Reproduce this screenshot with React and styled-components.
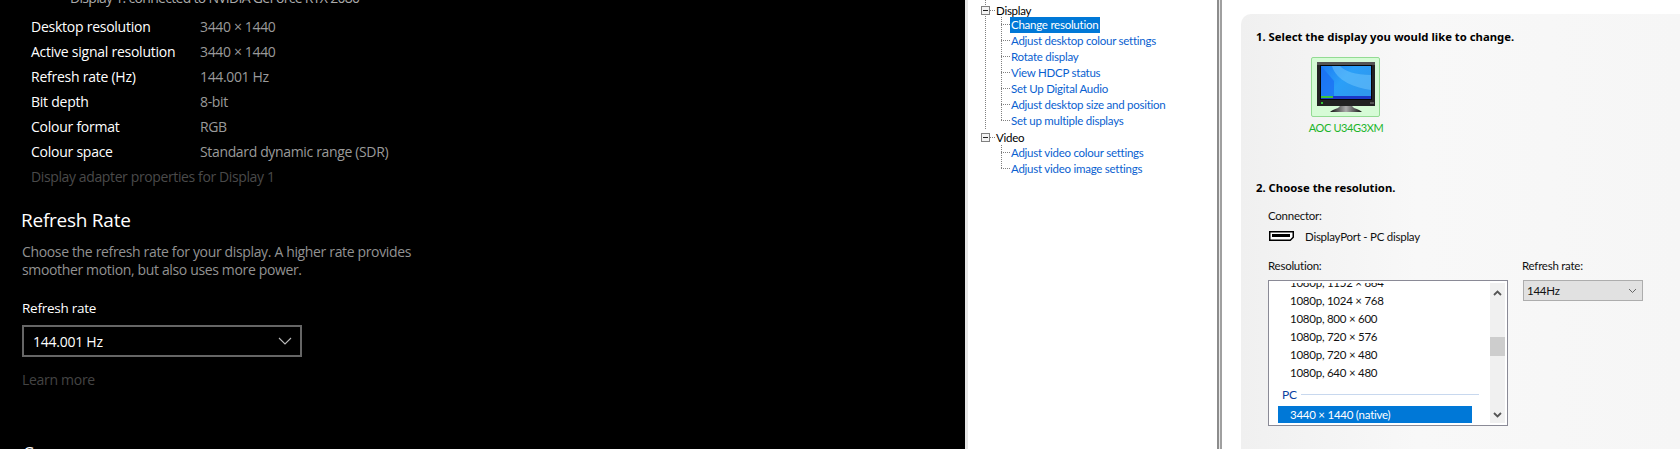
import React from 'react'
import styled, { createGlobalStyle } from 'styled-components'

const GlobalStyle = createGlobalStyle`
html, body { margin:0; padding:0; background:#fff; overflow:hidden; }
#root { width:1680px; height:449px; overflow:hidden; }
`

const info = [
  ['Desktop resolution', '3440 × 1440'],
  ['Active signal resolution', '3440 × 1440'],
  ['Refresh rate (Hz)', '144.001 Hz'],
  ['Bit depth', '8-bit'],
  ['Colour format', 'RGB'],
  ['Colour space', 'Standard dynamic range (SDR)'],
]

const displayLinks = [
  'Change resolution',
  'Adjust desktop colour settings',
  'Rotate display',
  'View HDCP status',
  'Set Up Digital Audio',
  'Adjust desktop size and position',
  'Set up multiple displays',
]

const videoLinks = ['Adjust video colour settings', 'Adjust video image settings']

const resolutions = ['1080p, 1152 × 864', '1080p, 1024 × 768', '1080p, 800 × 600', '1080p, 720 × 576', '1080p, 720 × 480', '1080p, 640 × 480']

const Minus = () => (
  <svg width="9" height="9" viewBox="0 0 9 9">
    <rect x="0.5" y="0.5" width="8" height="8" fill="#f4f4f4" stroke="#808080" />
    <path d="M2 4.5h5" stroke="#222" />
  </svg>
)

const MonitorIcon = () => (
  <svg width="60" height="52" viewBox="0 0 60 52">
    <defs>
      <linearGradient id="scr" x1="0" y1="0" x2="1" y2="0.6">
        <stop offset="0" stopColor="#1c7cf5" />
        <stop offset="0.5" stopColor="#2a9ff8" />
        <stop offset="1" stopColor="#2f98ee" />
      </linearGradient>
      <linearGradient id="base" x1="0" y1="0" x2="1" y2="0">
        <stop offset="0" stopColor="#111" />
        <stop offset="0.5" stopColor="#aaa" />
        <stop offset="1" stopColor="#111" />
      </linearGradient>
    </defs>
    <rect x="1" y="1" width="58" height="44" fill="#222" />
    <rect x="1" y="1" width="58" height="3" fill="#555" />
    <rect x="4" y="4" width="52" height="35" fill="#050505" />
    <rect x="5" y="5" width="50" height="33" fill="url(#scr)" />
    <path d="M16 5 C20 20 40 27 55 29 V14 C40 14 28 10 24 5Z" fill="#6cc2fb" opacity="0.55" />
    <path d="M5 5 L18 20 V35 H5Z" fill="#1a6cf2" opacity="0.7" />
    <rect x="5" y="35" width="50" height="3" fill="#1b38c8" />
    <rect x="5" y="35" width="12" height="2" fill="#3fc43a" />
    <rect x="5" y="41" width="2" height="2" fill="#36c236" />
    <rect x="54" y="41" width="4" height="2" fill="#555" />
    <path d="M24 45 H36 L38 47 Q44 49 46 51 H14 Q16 49 22 47Z" fill="url(#base)" />
  </svg>
)

const ConnectorIcon = () => (
  <svg width="25" height="10" viewBox="0 0 25 10">
    <path d="M.75.75h23.5v5.5l-3 3H.75z" fill="#fff" stroke="#000" strokeWidth="1.5" />
    <rect x="3" y="3" width="18" height="3" fill="#000" />
  </svg>
)

const Chevron = ({ up, color = '#555', w = 9, h = 6, sw = 1.8 }) => (
  <svg width={w} height={h} viewBox="0 0 9 6">
    <path d={up ? 'M1 5l3.5-3.5L8 5' : 'M1 1l3.5 3.5L8 1'} fill="none" stroke={color} strokeWidth={sw} />
  </svg>
)

const App = () => {
  return (
    <Page>
      <GlobalStyle />
      <SettingsPane>
        <ClippedLine>Display 1: connected to NVIDIA GeForce RTX 2080</ClippedLine>
        <InfoGrid>
          {info.map(([k, v]) => (
            <React.Fragment key={k}>
              <InfoLabel>{k}</InfoLabel>
              <InfoValue>{v}</InfoValue>
            </React.Fragment>
          ))}
        </InfoGrid>
        <AdapterLink>Display adapter properties for Display 1</AdapterLink>
        <Heading>Refresh Rate</Heading>
        <Descript>
          Choose the refresh rate for your display. A higher rate provides
          <br />
          smoother motion, but also uses more power.
        </Descript>
        <FieldLabel>Refresh rate</FieldLabel>
        <DarkSelect>
          144.001 Hz
          <svg width="14" height="8" viewBox="0 0 14 8">
            <path d="M1 1l6 6 6-6" fill="none" stroke="#bbb" strokeWidth="1.1" />
          </svg>
        </DarkSelect>
        <LearnMore>Learn more</LearnMore>
        <NextHeading>S</NextHeading>
      </SettingsPane>

      <TreePane>
        <Trunk>
          <TreeRow $h={14}>
            <Minus />
            <Dash />
            <NodeText>Display</NodeText>
          </TreeRow>
          <Branch>
            {displayLinks.map((l, i) => (
              <LeafRow key={l}>
                <Elbow $last={i === displayLinks.length - 1} />
                <Leaf $selected={i === 0}>{l}</Leaf>
              </LeafRow>
            ))}
          </Branch>
        </Trunk>
        <TreeRow $h={16}>
          <Minus />
          <Dash />
          <NodeText>Video</NodeText>
        </TreeRow>
        <Branch>
          {videoLinks.map((l, i) => (
            <LeafRow key={l}>
              <Elbow $last={i === videoLinks.length - 1} />
              <Leaf>{l}</Leaf>
            </LeafRow>
          ))}
        </Branch>
      </TreePane>

      <Splitter />

      <ContentPane>
        <Card>
          <StepTitle>1. Select the display you would like to change.</StepTitle>
          <DisplayTile>
            <MonitorIcon />
          </DisplayTile>
          <DisplayName>AOC U34G3XM</DisplayName>
          <StepTitle $second>2. Choose the resolution.</StepTitle>
          <Section>
            <SmallLabel>Connector:</SmallLabel>
            <ConnectorRow>
              <ConnectorIcon />
              <span>DisplayPort - PC display</span>
            </ConnectorRow>
            <Columns>
              <div>
                <SmallLabel>Resolution:</SmallLabel>
                <ListBox>
                  <ListBody>
                    <ListScroll>
                      {resolutions.map((r) => (
                        <ListItem key={r}>{r}</ListItem>
                      ))}
                      <GroupHead>
                        <span>PC</span>
                        <GroupRule />
                      </GroupHead>
                      <SelectedItem>3440 × 1440 (native)</SelectedItem>
                    </ListScroll>
                  </ListBody>
                  <Scrollbar>
                    <Chevron up />
                    <Thumb />
                    <Chevron />
                  </Scrollbar>
                </ListBox>
              </div>
              <div>
                <SmallLabel>Refresh rate:</SmallLabel>
                <RateSelect>
                  144Hz
                  <Chevron color="#666" sw={1} />
                </RateSelect>
              </div>
            </Columns>
          </Section>
        </Card>
      </ContentPane>
    </Page>
  )
}

const Page = styled.div`
display:flex;
width:1680px;
height:449px;
overflow:hidden;
background:#fff;
`

const SettingsPane = styled.div`
flex:0 0 965px;
height:449px;
overflow:hidden;
box-sizing:border-box;
padding-left:21px;
background:#000;
color:#fff;
font-family:"Open Sans","Noto Sans",sans-serif;
font-size:14px;
`

const ClippedLine = styled.div`
margin:-12px 0 0 49px;
height:20px;
line-height:20px;
color:#aaa;
letter-spacing:-0.7px;
`

const InfoGrid = styled.div`
display:grid;
grid-template-columns:169px auto;
grid-auto-rows:25px;
margin:6px 0 0 10px;
line-height:25px;
letter-spacing:-0.25px;
`

const InfoLabel = styled.div`
color:#fff;
`

const InfoValue = styled.div`
color:#9a9a9a;
letter-spacing:-0.35px;
`

const AdapterLink = styled.div`
margin-left:10px;
height:25px;
line-height:25px;
color:#4a4a4a;
letter-spacing:-0.38px;
`

const Heading = styled.div`
margin-top:15px;
height:32px;
line-height:32px;
font-size:19px;
letter-spacing:-0.25px;
`

const Descript = styled.div`
margin:7px 0 0 1px;
line-height:18px;
color:#929292;
letter-spacing:-0.35px;
`

const FieldLabel = styled.div`
margin:19px 0 0 1px;
height:20px;
line-height:20px;
font-size:13.5px;
letter-spacing:-0.25px;
`

const DarkSelect = styled.div`
display:flex;
align-items:center;
justify-content:space-between;
box-sizing:border-box;
width:280px;
height:32px;
margin:7px 0 0 1px;
padding:0 8px 0 9px;
border:2px solid #666;
font-size:14px;
letter-spacing:-0.25px;
`

const LearnMore = styled.div`
margin:13px 0 0 1px;
line-height:20px;
color:#444;
letter-spacing:-0.3px;
`

const NextHeading = styled.div`
margin:47px 0 0 3px;
font-size:19px;
line-height:32px;
`

const TreePane = styled.div`
flex:0 0 252px;
box-sizing:border-box;
height:449px;
overflow:hidden;
padding-left:13px;
border-left:3px solid #e6e6e6;
font-family:Lato,"Noto Sans",sans-serif;
font-size:11.5px;
letter-spacing:-0.25px;
`

const Trunk = styled.div`
padding-top:3px;
background:repeating-linear-gradient(180deg,#808080 0 1px,transparent 1px 2px) 4px 0 / 1px 100% no-repeat;
`

const TreeRow = styled.div`
display:flex;
align-items:center;
height:${(p) => p.$h}px;
`

const Dash = styled.span`
width:5px;
height:1px;
margin:0 1px 0 0;
background:repeating-linear-gradient(90deg,#808080 0 1px,transparent 1px 2px);
`

const NodeText = styled.span`
color:#000;
line-height:15px;
background:#fff;
`

const Branch = styled.div`
margin-left:20px;
`

const LeafRow = styled.div`
display:flex;
height:16px;
`

const Elbow = styled.span`
flex:0 0 9px;
height:${(p) => (p.$last ? '8px' : '16px')};
background:
  repeating-linear-gradient(180deg,#808080 0 1px,transparent 1px 2px) 0 0 / 1px 100% no-repeat,
  repeating-linear-gradient(90deg,#808080 0 1px,transparent 1px 2px) 0 7px / 100% 1px no-repeat;
`

const Leaf = styled.span`
padding:0 1px;
line-height:16px;
color:${(p) => (p.$selected ? '#fff' : '#0a5fd0')};
background:${(p) => (p.$selected ? '#0078d7' : 'transparent')};
${(p) => p.$selected && 'padding-right:2px;'}
`

const Splitter = styled.div`
flex:0 0 5px;
box-sizing:border-box;
border-left:2px solid #8c8c8c;
border-right:2px solid #a0a0a0;
background:#e8e8e8;
`

const ContentPane = styled.div`
flex:1;
box-sizing:border-box;
height:449px;
padding:14px 0 0 19px;
overflow:hidden;
background:#fff;
`

const Card = styled.div`
height:435px;
box-sizing:border-box;
padding:15px 0 0 15px;
border-radius:10px 0 0 0;
background:linear-gradient(90deg,#f0f0f0,#f8f8f8 40%,#f6f6f6);
font-family:Lato,"Noto Sans",sans-serif;
font-size:11.5px;
letter-spacing:-0.25px;
color:#111;
`

const StepTitle = styled.div`
height:15px;
line-height:15px;
margin-top:${(p) => (p.$second ? '45px' : '0')};
font-family:"Noto Sans",sans-serif;
font-weight:bold;
font-size:11.3px;
letter-spacing:0;
color:#000;
`

const DisplayTile = styled.div`
display:flex;
align-items:flex-start;
justify-content:center;
box-sizing:border-box;
width:69px;
height:60px;
margin:13px 0 0 55px;
padding-top:3px;
background:#d6fbd6;
border:1px solid #93db93;
border-radius:2px;
`

const DisplayName = styled.div`
width:90px;
margin:3px 0 0 45px;
text-align:center;
line-height:15px;
white-space:nowrap;
font-size:11px;
letter-spacing:-0.4px;
color:#1bb52a;
`

const Section = styled.div`
margin:13px 0 0 12px;
`

const SmallLabel = styled.div`
height:15px;
line-height:15px;
`

const ConnectorRow = styled.div`
display:flex;
align-items:center;
gap:11px;
height:18px;
margin:4px 0 0 1px;
`

const Columns = styled.div`
display:flex;
gap:14px;
margin-top:13px;
`

const ListBox = styled.div`
display:flex;
box-sizing:border-box;
width:240px;
height:146px;
margin-top:7px;
padding:2px 2px 2px 0;
background:#fff;
border:1px solid #8a8a96;
`

const ListBody = styled.div`
flex:1;
overflow:hidden;
`

const ListScroll = styled.div`
margin-top:-9px;
`

const ListItem = styled.div`
height:18px;
padding-left:21px;
line-height:18px;
`

const GroupHead = styled.div`
display:flex;
align-items:center;
gap:4px;
height:20px;
margin:2px 0 0 13px;
color:#0a3fa0;
font-size:12px;
`

const GroupRule = styled.span`
width:178px;
height:1px;
background:#c8d8ee;
`

const SelectedItem = styled.div`
width:194px;
height:17px;
margin:2px 0 0 9px;
padding-left:12px;
box-sizing:border-box;
line-height:17px;
color:#fff;
background:#0078d7;
`

const Scrollbar = styled.div`
flex:0 0 15px;
display:flex;
flex-direction:column;
align-items:center;
justify-content:space-between;
padding:7px 0 5px;
box-sizing:border-box;
background:#f0f0f0;
position:relative;
`

const Thumb = styled.div`
position:absolute;
top:54px;
left:0;
width:15px;
height:19px;
background:#cdcdcd;
`

const RateSelect = styled.div`
display:flex;
align-items:center;
justify-content:space-between;
box-sizing:border-box;
width:120px;
height:21px;
margin:7px 0 0 1px;
padding:0 5px 0 3px;
background:#e1e1e1;
border:1px solid #adadad;
`

export default App
